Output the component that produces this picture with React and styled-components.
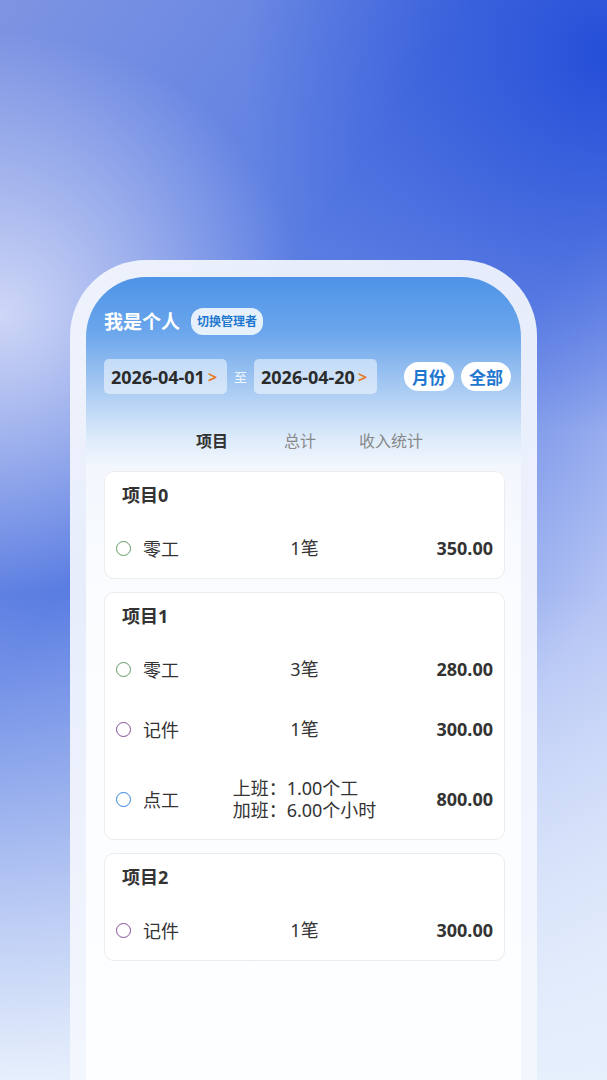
import React from "react";
import styled, { createGlobalStyle } from "styled-components";

const GlobalStyle = createGlobalStyle`
  body {
    margin: 0;
    font-family: "Noto Sans", "Noto Sans CJK SC", sans-serif;
    color: #333;
  }
`

const Page = styled.div`
  width: 607px;
  height: 1080px;
  overflow: hidden;
  box-sizing: border-box;
  padding: 260px 0 0 70px;
  background:
    radial-gradient(ellipse 50% 26% at 0% 29%, rgba(212, 219, 248, 0.95), rgba(212, 219, 248, 0) 100%),
    radial-gradient(ellipse 60% 35% at 100% 5%, rgba(36, 78, 216, 1), rgba(36, 78, 216, 0) 100%),
    linear-gradient(180deg, rgba(255, 255, 255, 0) 55%, #e6effc 100%),
    linear-gradient(125deg, #7f95e2 0%, #5a7de2 35%, #6e8ce6 55%, #b4c4f4 75%, #dde8fb 100%);
`

const Frame = styled.div`
  width: 467px;
  height: 820px;
  box-sizing: border-box;
  padding: 17px 16px 0 16px;
  border-radius: 76px 76px 0 0;
  background: rgba(243, 246, 253, 0.92);
`

const Screen = styled.div`
  height: 100%;
  border-radius: 60px 60px 0 0;
  overflow: hidden;
  box-sizing: border-box;
  padding: 29px 16px 0 18px;
  background: linear-gradient(180deg, #4e93e6 0px, #6ba6ec 55px, #a6c9f2 110px, #dbeafa 160px, #f3f7fd 190px, #fafcff 320px, #fdfeff 100%);
`

const HeaderRow = styled.div`
  display: flex;
  align-items: center;
  gap: 11px;
  height: 30px;
`

const Who = styled.div`
  font-size: 19px;
  font-weight: 700;
  color: #fff;
`

const Badge = styled.div`
  height: 27px;
  padding: 0 6px;
  display: flex;
  align-items: center;
  border-radius: 12px;
  background: rgba(236, 244, 253, 0.95);
  color: #1f77d0;
  font-size: 12px;
  font-weight: 700;
`

const DateRow = styled.div`
  display: flex;
  align-items: center;
  margin-top: 23px;
  margin-right: -6px;
  height: 35px;
`

const DateBox = styled.div`
  width: 123px;
  height: 35px;
  box-sizing: border-box;
  padding-left: 7px;
  display: flex;
  align-items: center;
  border-radius: 5px;
  background: rgba(255, 255, 255, 0.5);
  font-size: 18px;
  font-weight: 700;
  color: #2b2b2b;
`

const Chevron = styled.span`
  margin-left: 3px;
  color: #e57b2d;
  font-size: 16px;
  font-weight: 700;
`

const To = styled.span`
  width: 27px;
  text-align: center;
  color: rgba(255, 255, 255, 0.85);
  font-size: 13px;
`

const Pills = styled.div`
  margin-left: auto;
  display: flex;
  gap: 7px;
`

const Pill = styled.div`
  width: 50px;
  height: 29px;
  display: flex;
  align-items: center;
  justify-content: center;
  border-radius: 15px;
  background: #fff;
  color: #1f77d0;
  font-size: 17px;
  font-weight: 700;
`

const Tabs = styled.div`
  display: flex;
  align-items: center;
  height: 30px;
  margin-top: 31px;
  padding-left: 92px;
`

const Tab = styled.div`
  font-size: 16px;
  margin-right: ${p => p.gap || 0}px;
  color: ${p => (p.active ? "#333" : "#888")};
  font-weight: ${p => (p.active ? 700 : 400)};
`

const List = styled.div`
  margin-top: 16px;
  display: flex;
  flex-direction: column;
  gap: 13px;
`

const Card = styled.div`
  background: #fff;
  border: 1px solid #ececec;
  border-radius: 10px;
  padding: 12px 11px 0 11px;
`

const CardTitle = styled.div`
  font-size: 18px;
  font-weight: 700;
  line-height: 22px;
  padding-left: 6px;
  margin-bottom: 12px;
`

const Row = styled.div`
  display: grid;
  grid-template-columns: 1fr auto 1fr;
  align-items: center;
  height: ${p => p.tall ? 80 : 60}px;
`

const Kind = styled.div`
  display: flex;
  align-items: center;
  gap: 12px;
  font-size: 18px;
`

const Dot = styled.span`
  width: 13px;
  height: 13px;
  border-radius: 50%;
  border: 1.8px solid ${p => p.color};
`

const Count = styled.div`
  font-size: 18px;
  line-height: 22px;
  text-align: left;
`

const Amount = styled.div`
  justify-self: end;
  font-size: 18px;
  font-weight: 700;
`

const colors = { 零工: "#5f9a66", 记件: "#834d97", 点工: "#3386de" };

const projects = [
  { name: "项目0", rows: [{ kind: "零工", count: ["1笔"], amount: "350.00" }] },
  {
    name: "项目1",
    rows: [
      { kind: "零工", count: ["3笔"], amount: "280.00" },
      { kind: "记件", count: ["1笔"], amount: "300.00" },
      { kind: "点工", count: ["上班：1.00个工", "加班：6.00个小时"], amount: "800.00" },
    ],
  },
  { name: "项目2", rows: [{ kind: "记件", count: ["1笔"], amount: "300.00" }] },
];

function App() {
  return (
    <Page>
      <GlobalStyle />
      <Frame>
        <Screen>
          <HeaderRow>
            <Who>我是个人</Who>
            <Badge>切换管理者</Badge>
          </HeaderRow>
          <DateRow>
            <DateBox>2026-04-01<Chevron>&gt;</Chevron></DateBox>
            <To>至</To>
            <DateBox>2026-04-20<Chevron>&gt;</Chevron></DateBox>
            <Pills>
              <Pill>月份</Pill>
              <Pill>全部</Pill>
            </Pills>
          </DateRow>
          <Tabs>
            <Tab active gap={56}>项目</Tab>
            <Tab gap={43}>总计</Tab>
            <Tab>收入统计</Tab>
          </Tabs>
          <List>
            {projects.map(p => (
              <Card key={p.name}>
                <CardTitle>{p.name}</CardTitle>
                {p.rows.map((r, i) => (
                  <Row key={i} tall={r.count.length > 1}>
                    <Kind><Dot color={colors[r.kind]} />{r.kind}</Kind>
                    <Count>{r.count.map(c => <div key={c}>{c}</div>)}</Count>
                    <Amount>{r.amount}</Amount>
                  </Row>
                ))}
              </Card>
            ))}
          </List>
        </Screen>
      </Frame>
    </Page>
  );
}

export default App
